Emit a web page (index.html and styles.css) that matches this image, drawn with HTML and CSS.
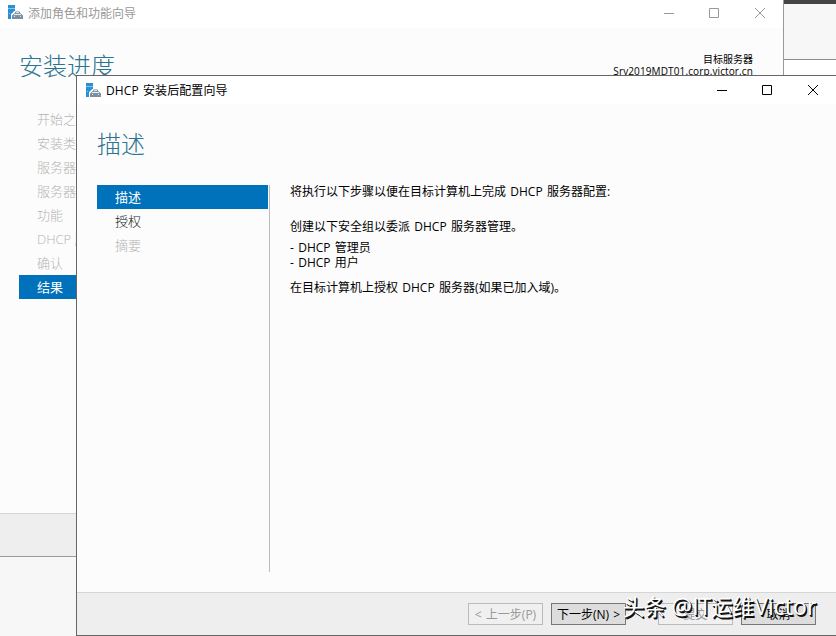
FILE: index.html
```html
<!DOCTYPE html>
<html lang="zh-CN">
<head>
  <meta charset="UTF-8">
  <title>DHCP 安装后配置向导</title>
  <link rel="stylesheet" href="styles.css">
</head>
<body>

<svg class="defs" width="0" height="0">
  <symbol id="server-icon" viewBox="0 0 15 15">
    <path fill="#2b8fd6" d="M0 0h7v3H0zM0 4h7v2L3 9v5H0z"/>
    <path fill="#8cc4ea" d="M0 3h7v1H0zM1 8h1v1H1z"/>
    <path fill="#fff" d="M6 6h6l3 3v5H4V9z"/>
    <path fill="#e4eaee" stroke="#6e8798" stroke-width=".8" d="M4.500 10.500L6.500 8.500h6l2 2z"/>
    <path fill="none" stroke="#6e8798" stroke-width=".8" d="M7.500 8.500V6.900h4v1.600"/>
    <path fill="#7890a1" d="M4 10.500h11V14H4z"/>
    <path fill="#dde5ea" d="M6 11h1v1H6zM12 11h1v1h-1z"/>
  </symbol>
</svg>

<div class="desktop">
  <div class="panel"></div>

  <div class="window back">
    <div class="titlebar">
      <svg class="app-icon"><use href="#server-icon"/></svg>
      <span class="title">添加角色和功能向导</span>
      <svg class="controls" viewBox="0 0 104 12"><path d="M0 6.500h10M45.500 1.500h9v9h-9zM91 1l10 10M101 1L91 11"/></svg>
    </div>
    <div class="header">
      <h1>安装进度</h1>
      <div class="target">目标服务器<br><span class="host">Srv2019MDT01.corp.victor.cn</span></div>
    </div>
    <ul class="steps">
      <li>开始之前</li>
      <li>安装类型</li>
      <li>服务器选择</li>
      <li>服务器角色</li>
      <li>功能</li>
      <li>DHCP 服务器</li>
      <li>确认</li>
      <li class="active">结果</li>
    </ul>
    <div class="footer"></div>
  </div>

  <div class="window front">
    <div class="titlebar">
      <svg class="app-icon"><use href="#server-icon"/></svg>
      <span class="title">DHCP 安装后配置向导</span>
      <svg class="controls" viewBox="0 0 104 12"><path d="M0 6.500h10M45.500 1.500h9v9h-9zM91 1l10 10M101 1L91 11"/></svg>
    </div>
    <h1>描述</h1>
    <div class="content">
      <ul class="steps">
        <li class="active">描述</li>
        <li class="enabled">授权</li>
        <li>摘要</li>
      </ul>
      <div class="text">
        <p class="intro">将执行以下步骤以便在目标计算机上完成 DHCP 服务器配置:</p>
        <p>创建以下安全组以委派 DHCP 服务器管理。</p>
        <p class="groups">- DHCP 管理员<br>- DHCP 用户</p>
        <p>在目标计算机上授权 DHCP 服务器(如果已加入域)。</p>
      </div>
    </div>
    <div class="footer">
      <button disabled>&lt; 上一步(P)</button>
      <button>下一步(N) &gt;</button>
      <button class="commit" disabled>提交</button>
      <button>取消</button>
    </div>
  </div>

  <div class="watermark">头条 <span class="latin">@IT</span>运维<span class="latin">Victor</span></div>
</div>

</body>
</html>
```

FILE: styles.css
```css
* {
  box-sizing: border-box;
}

body {
  margin: 0;
  font-family: "Open Sans", "Noto Sans CJK SC", sans-serif;
  font-size: 12px;
  color: #000;
}

h1, p, ul {
  margin: 0;
  padding: 0;
  font-weight: normal;
}

.defs {
  position: absolute;
}

.desktop {
  position: relative;
  width: 836px;
  height: 636px;
  overflow: hidden;
  background: #f7f7f7;
}

.panel {
  height: 76px;
  background: linear-gradient(#444 4px, #f7f7f7 4px, #f7f7f7 59px, #8c8c8c 59px, #8c8c8c 60px, #fff 60px);
}

.window {
  position: absolute;
  display: flex;
  flex-direction: column;
  background: #fcfcfc;
}

.back {
  left: 0;
  top: 0;
  width: 784px;
  height: 557px;
  border-right: 1px solid #999;
  border-bottom: 1px solid #999;
}

.front {
  left: 76px;
  top: 75px;
  width: 762px;
  height: 561px;
  border: 1px solid #666;
}

/* title bar */
.titlebar {
  display: flex;
  align-items: center;
  flex: none;
  height: 28px;
  padding-left: 8px;
  background: #fff;
}

.back .titlebar {
  padding-bottom: 3px;
}

.app-icon {
  width: 15px;
  height: 15px;
  margin-right: 5px;
}

.front .app-icon {
  margin-left: 1px;
}

.title {
  word-spacing: 1px;
}

.front .title {
  letter-spacing: 0.1px;
}

.back .title {
  color: #999;
}

.controls {
  width: 104px;
  height: 12px;
  margin-left: auto;
  margin-right: 15px;
  fill: none;
  stroke: #000;
}

.back .controls {
  stroke: #999;
}

.front .controls {
  margin-right: 16px;
}

h1 {
  font-size: 24px;
  line-height: 36px;
  font-weight: 300;
  color: #2a7391;
}

.header {
  display: flex;
  justify-content: space-between;
  height: 79px;
  padding: 20px 30px 0 19px;
}

.target {
  padding-top: 5px;
  font-size: 10px;
  line-height: 12px;
  text-align: right;
}

.host {
  letter-spacing: 0.12px;
}

/* step list */
.steps {
  list-style: none;
  font-size: 13px;
  font-weight: 300;
  line-height: 24px;
  color: #b4b4b4;
}

.steps li {
  height: 24px;
  padding-left: 18px;
  white-space: nowrap;
}

.steps .enabled {
  color: #222;
}

.steps .active {
  background: #0072bc;
  color: #fff;
  font-weight: normal;
}

.back .steps {
  width: 172px;
  margin-left: 19px;
}

.front h1 {
  padding: 22px 0 0 20px;
}

.content {
  display: flex;
  margin: 23px 0 20px 20px;
  flex: 1;
}

.front .steps {
  width: 173px;
  padding-right: 1px;
  border-right: 1px solid #bbb;
}

.text {
  margin-top: -1px;
  padding-left: 20px;
  line-height: 15px;
  word-spacing: 1.2px;
}

.text .intro {
  margin-bottom: 20px;
}

.text .groups {
  margin: 6px 0 10px;
}

/* buttons */
.footer {
  display: flex;
  flex: none;
  height: 43px;
  margin-top: auto;
  padding: 10px 0 0 391px;
  border-top: 1px solid #d5d5d5;
  background: #eee;
}

button {
  width: 75px;
  height: 22px;
  margin-right: 8px;
  padding: 2px 0 0;
  border: 1px solid #777;
  background: #ddd;
  font: inherit;
  line-height: 18px;
  word-spacing: 1px;
  white-space: nowrap;
}

button:disabled {
  border-color: #bbb;
  background: #f0f0f0;
  color: #999;
}

.commit {
  margin-left: 24px;
}

.watermark {
  position: absolute;
  left: 623px;
  top: 591px;
  font-size: 21.5px;
  line-height: 30px;
  color: #fff;
  text-shadow: 1px 1px 0 #111, 1.5px 1.5px 0 #111;
  white-space: nowrap;
}

.watermark .latin {
  font-size: 23px;
}
```
